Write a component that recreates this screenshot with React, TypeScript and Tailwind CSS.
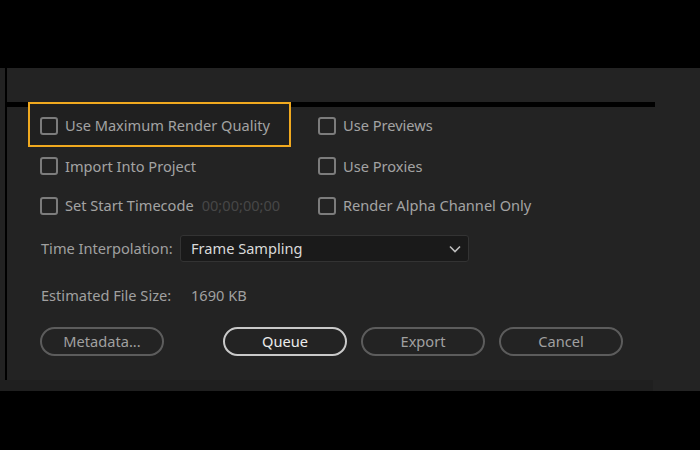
import { useState } from "react";

type Opt = { id: string; label: string };

const Checkbox = ({ label, checked, onToggle }: { label: string; checked: boolean; onToggle: () => void }) => (
    <button onClick={onToggle} className="flex items-center gap-[7px] text-[14.6px] text-[#a3a3a3]">
        <span className="w-[18px] h-[18px] rounded-[3px] border-2 border-[#7c7c7c] flex items-center justify-center">
            {checked && <span className="w-[8px] h-[8px] bg-[#a3a3a3]" />}
        </span>
        <span>{label}</span>
    </button>
);

const PillButton = ({ label, primary }: { label: string; primary?: boolean }) => (
    <button
        className={
            primary
                ? "w-[124px] h-[29px] rounded-full border-2 border-[#c9c9c9] text-[14.6px] text-[#ececec]"
                : "w-[124px] h-[29px] rounded-full border-2 border-[#5c5c5c] text-[14.6px] text-[#a0a0a0]"
        }
    >
        {label}
    </button>
);

const App = () => {
    const [checked, setChecked] = useState<Record<string, boolean>>({});
    const toggle = (id: string) => setChecked((c) => ({ ...c, [id]: !c[id] }));

    const left: Opt[] = [
        { id: "max", label: "Use Maximum Render Quality" },
        { id: "import", label: "Import Into Project" },
        { id: "timecode", label: "Set Start Timecode" },
    ];
    const right: Opt[] = [
        { id: "previews", label: "Use Previews" },
        { id: "proxies", label: "Use Proxies" },
        { id: "alpha", label: "Render Alpha Channel Only" },
    ];

    return (
        <div
            className="w-[700px] h-[450px] bg-black flex flex-col"
            style={{ fontFamily: '"Noto Sans", "Open Sans", sans-serif' }}
        >
            <div className="h-[68px]" />
            <div className="h-[323px] bg-[#232323] flex flex-col">
                <div className="flex flex-1">
                    <div className="w-[5px] bg-[#222222]" />
                    <div className="w-[2px] bg-black" />
                    <div className="flex-1 flex flex-col">
                        <div className="h-[34px]" />
                        <div className="h-[5px] w-[648px] bg-black" />

                        {/* checkbox rows */}
                        <div className="-mt-[5px] pl-[21px] flex flex-col">
                            <div className="flex h-[45px] items-center">
                                <div className="w-[290px]">
                                    <div className="w-[263px] h-[45px] border-2 border-[#f0a91f] bg-[#202020] pl-[10px] pt-[3px] flex items-center">
                                        <Checkbox label={left[0].label} checked={!!checked[left[0].id]} onToggle={() => toggle(left[0].id)} />
                                    </div>
                                </div>
                                <div className="pt-[3px]">
                                    <Checkbox label={right[0].label} checked={!!checked[right[0].id]} onToggle={() => toggle(right[0].id)} />
                                </div>
                            </div>
                            <div className="flex h-[39px] items-center">
                                <div className="w-[290px] pl-[12px]">
                                    <Checkbox label={left[1].label} checked={!!checked[left[1].id]} onToggle={() => toggle(left[1].id)} />
                                </div>
                                <Checkbox label={right[1].label} checked={!!checked[right[1].id]} onToggle={() => toggle(right[1].id)} />
                            </div>
                            <div className="flex h-[40px] items-center">
                                <div className="w-[290px] pl-[12px] flex items-center gap-[8px]">
                                    <Checkbox label={left[2].label} checked={!!checked[left[2].id]} onToggle={() => toggle(left[2].id)} />
                                    <span className="text-[14.6px] text-[#474747]">00;00;00;00</span>
                                </div>
                                <Checkbox label={right[2].label} checked={!!checked[right[2].id]} onToggle={() => toggle(right[2].id)} />
                            </div>
                        </div>

                        <div className="pl-[34px] mt-[9px] flex items-center h-[27px]">
                            <span className="w-[139px] text-[14.6px] text-[#a0a0a0]">Time Interpolation:</span>
                            <div className="w-[289px] h-[27px] bg-[#1a1a1a] border border-[#333333] rounded-[3px] flex items-center justify-between pl-[10px] pr-[7px]">
                                <span className="text-[14.6px] text-[#d9d9d9]">Frame Sampling</span>
                                <svg width="12" height="8" viewBox="0 0 12 8" fill="none">
                                    <path d="M1 1.5L6 6.5L11 1.5" stroke="#bdbdbd" strokeWidth="1.6" />
                                </svg>
                            </div>
                        </div>

                        <div className="pl-[34px] mt-[20px] flex items-center h-[27px]">
                            <span className="w-[150px] text-[14.6px] text-[#a0a0a0]">Estimated File Size:</span>
                            <span className="text-[14.6px] text-[#a0a0a0]">1690 KB</span>
                        </div>

                        <div className="pl-[33px] mt-[18px] flex items-center">
                            <PillButton label="Metadata..." />
                            <div className="ml-[59px] flex gap-[14px]">
                                <PillButton label="Queue" primary />
                                <PillButton label="Export" />
                                <PillButton label="Cancel" />
                            </div>
                        </div>
                    </div>
                </div>
                <div className="h-[11px] w-[653px] bg-[#1f1f1f]" />
            </div>
        </div>
    );
};

export default App;
